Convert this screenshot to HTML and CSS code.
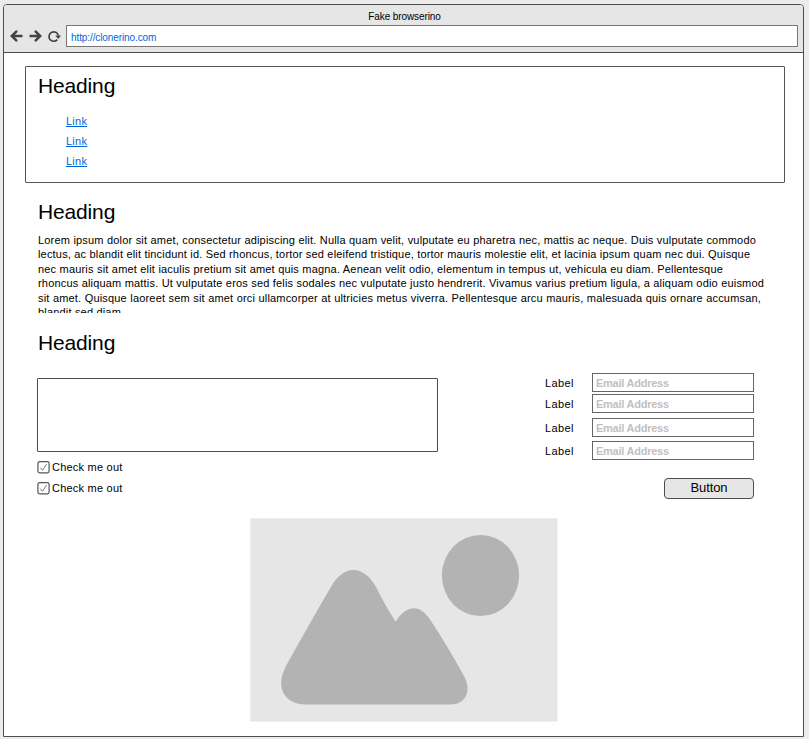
FILE: index.html
```html
<!DOCTYPE html>
<html lang="en">
<head>
<meta charset="utf-8">
<title>Fake browserino</title>
<link rel="stylesheet" href="styles.css">
</head>
<body>
<div class="window">
  <header class="chrome">
    <div class="title">Fake browserino</div>
    <div class="toolbar">
      <svg class="nav" width="54" height="16" viewBox="0 0 54 16" fill="none" stroke="#444" stroke-width="2.5">
        <path d="M13.500 8H3M8 2.800L2.800 8l5.200 5.200"/>
        <path d="M20.500 8H31M26 2.800l5.200 5.200-5.200 5.200"/>
        <path d="M48.300 11.600A4.700 4.700 0 1 1 49.300 7.500" stroke-width="1.700"/>
        <path d="M46.300 7.400h5.800l-2.900 3.500z" fill="#444" stroke="none"/>
      </svg>
      <div class="address">http://clonerino.com</div>
    </div>
  </header>
  <main class="content">
    <nav class="links">
      <h2>Heading</h2>
      <ul>
        <li><a href="#">Link</a></li>
        <li><a href="#">Link</a></li>
        <li><a href="#">Link</a></li>
      </ul>
    </nav>
    <section class="article">
      <h2>Heading</h2>
      <div class="copy">
        <p class="l1">Lorem ipsum dolor sit amet, consectetur adipiscing elit. Nulla quam velit, vulputate eu pharetra nec, mattis ac neque. Duis vulputate commodo</p>
        <p class="l2">lectus, ac blandit elit tincidunt id. Sed rhoncus, tortor sed eleifend tristique, tortor mauris molestie elit, et lacinia ipsum quam nec dui. Quisque</p>
        <p class="l3">nec mauris sit amet elit iaculis pretium sit amet quis magna. Aenean velit odio, elementum in tempus ut, vehicula eu diam. Pellentesque</p>
        <p class="l4">rhoncus aliquam mattis. Ut vulputate eros sed felis sodales nec vulputate justo hendrerit. Vivamus varius pretium ligula, a aliquam odio euismod</p>
        <p class="l5">sit amet. Quisque laoreet sem sit amet orci ullamcorper at ultricies metus viverra. Pellentesque arcu mauris, malesuada quis ornare accumsan,</p>
        <p class="l6">blandit sed diam.</p>
      </div>
    </section>
    <section class="form">
      <h2>Heading</h2>
      <div class="columns">
        <div class="left">
          <div class="textarea"></div>
          <div class="check"><svg width="13" height="13" viewBox="0 0 13 13"><rect x=".9" y=".7" width="11.2" height="11.2" rx="1.8" fill="#fff" stroke="#555" stroke-width="1.2"/><path d="M3.200 6.700l2.300 2.600L9.500 3.200" fill="none" stroke="#777"/></svg>Check me out</div>
          <div class="check"><svg width="13" height="13" viewBox="0 0 13 13"><rect x=".9" y=".7" width="11.2" height="11.2" rx="1.8" fill="#fff" stroke="#555" stroke-width="1.2"/><path d="M3.200 6.700l2.300 2.600L9.500 3.200" fill="none" stroke="#777"/></svg>Check me out</div>
        </div>
        <div class="right">
          <div class="field"><label>Label</label><div class="input">Email Address</div></div>
          <div class="field f2"><label>Label</label><div class="input">Email Address</div></div>
          <div class="field f3"><label>Label</label><div class="input">Email Address</div></div>
          <div class="field f4"><label>Label</label><div class="input">Email Address</div></div>
          <div class="button">Button</div>
        </div>
      </div>
    </section>
    <svg class="picture" width="308" height="204" viewBox="0 0 308 204">
      <rect x=".3" y=".3" width="307.2" height="203.2" fill="#e6e6e6"/>
      <ellipse cx="230.5" cy="57.500" rx="38.6" ry="40.6" fill="#b3b3b3"/>
      <path fill="#b3b3b3" d="M81.500 68C94 46.500 113.500 46.500 126 69C132 81 138 92 145.700 103.700C156 87 169 86 179 100C191 118 203 138 214 158C222 173 216 186.500 200 186.500H56C36 186.500 24 171 36 148C51 121 66 94 81.500 68Z"/>
    </svg>
  </main>
</div>
</body>
</html>
```
FILE: styles.css
```css
* { box-sizing: border-box; }
body {
  margin: 0;
  height: 739px;
  padding: 4px 5px 2px 3px;
  overflow: hidden;
  background: #ececec;
  font: 11px/14px "Liberation Sans", Arial, sans-serif;
  letter-spacing: 0.4px;
  color: #000;
}
h2, p, ul { margin: 0; padding: 0; }
h2 { font-size: 21px; line-height: 24px; font-weight: 400; letter-spacing: -0.15px; }
.window {
  height: 733px;
  border: 1px solid #4d4d4d;
  border-radius: 4px 4px 0 0;
  background: #fff;
  overflow: hidden;
}
.chrome {
  height: 48px;
  background: #e6e6e6;
  border-bottom: 1px solid #4d4d4d;
}
.title { height: 20px; padding: 5px 0 0 2px; text-align: center; font-size: 10px; letter-spacing: -0.1px; }
.toolbar { display: flex; padding: 0 5px 0 5px; }
.nav { margin: 3px 3px 0 0; }
.address {
  flex: 1;
  height: 22px;
  border: 1px solid #777;
  background: #fff;
  padding: 5px 4px;
  font-size: 10px;
  line-height: 14px;
  letter-spacing: -0.1px;
  color: #0066dd;
}
.content { padding: 13px 18px 0 21px; }
.links { height: 117px; border: 1px solid #555; border-radius: 1px; padding: 7px 12px; }
.links ul { list-style: none; margin: 13px 0 0 28px; }
.links li { height: 20px; line-height: 20px; letter-spacing: 0.25px; }
a { color: #0066dd; }
.article { padding: 17px 0 0 13px; }
.copy { height: 80px; margin-top: 9px; overflow: hidden; letter-spacing: 0.18px; }
.copy p { height: 14.4px; line-height: 14.4px; white-space: nowrap; text-align-last: justify; }
.l1 { width: 718px; }
.l2 { width: 712px; }
.l3 { width: 685px; }
.l4 { width: 726px; }
.l5 { width: 723px; }
.l6 { width: 83px; }
.form { padding: 18px 0 0 13px; }
.columns { display: flex; justify-content: space-between; margin-top: 18px; padding-right: 31px; height: 145px; }
.left { width: 401px; margin-left: -1px; padding-top: 5px; }
.textarea { height: 74px; border: 1px solid #4d4d4d; border-radius: 1px; margin-bottom: 8px; }
.check { display: flex; align-items: center; height: 14px; margin-bottom: 7px; letter-spacing: 0.22px; }
.check svg { margin-right: 2px; }
.right { width: 209px; }
.field { display: flex; height: 19px; align-items: center; margin-bottom: 2px; }
.f2 { margin-bottom: 5px; }
.f3 { margin-bottom: 4px; }
.field label { width: 47px; }
.input {
  flex: 1;
  height: 19px;
  border: 1px solid #666;
  padding: 2px 3px;
  font-weight: 700;
  line-height: 14px;
  color: #bfbfbf;
  letter-spacing: -0.25px;
}
.button {
  width: 90px;
  height: 21px;
  margin: 18px 0 0 auto;
  border: 1px solid #4d4d4d;
  border-radius: 4px;
  background: #e6e6e6;
  text-align: center;
  font-size: 13px;
  line-height: 18px;
  letter-spacing: -0.1px;
}
.picture { display: block; margin-left: 225px; }
```
